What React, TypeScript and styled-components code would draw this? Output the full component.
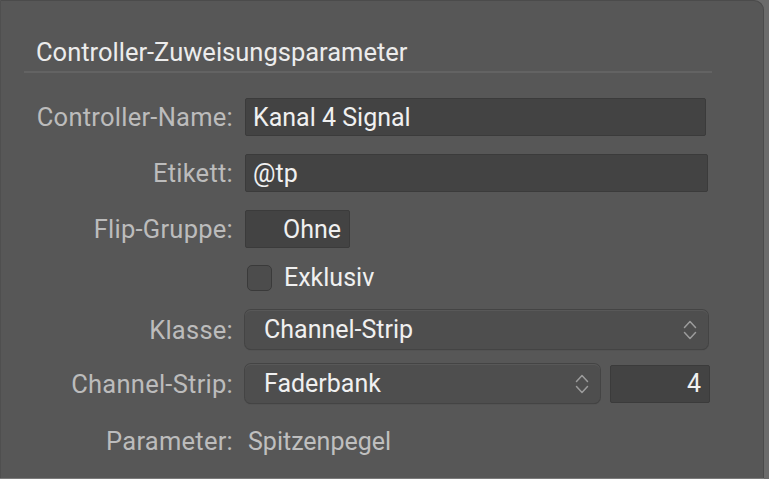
import React from 'react';
import styled, { createGlobalStyle } from 'styled-components';

const GlobalStyle = createGlobalStyle`
  html, body {
    margin: 0;
    padding: 0;
    background: #6b6b6b;
    width: 769px;
    height: 479px;
    overflow: hidden;
  }
  body {
    font-family: Roboto, "Noto Sans", sans-serif;
    -webkit-font-smoothing: antialiased;
  }
`;

const Panel = styled.div`
  box-sizing: border-box;
  width: 764px;
  height: 478px;
  background: #575757;
  border-top: 1px solid #4b4b4b;
  border-right: 1px solid #4b4b4b;
  border-left: 1px solid #4f4f4f;
  border-top-right-radius: 10px;
  padding: 37px 0 0 23px;
  box-shadow: 0 1px 0 #7a7a7a;
`;

const Header = styled.div`
  width: 688px;
  border-bottom: 2px solid #636363;
  padding: 0 0 5px 12px;
  box-sizing: border-box;
`;

const Title = styled.h2`
  margin: 0;
  font-weight: 400;
  font-size: 25.5px;
  line-height: 28px;
  color: #ececec;
`;

const Form = styled.div`
  display: flex;
  flex-direction: column;
`;

const Row = styled.div<{ $top: number; $height: number }>`
  display: grid;
  grid-template-columns: 209px auto;
  column-gap: 12px;
  align-items: center;
  margin-top: ${(p) => p.$top}px;
  height: ${(p) => p.$height}px;
`;

const Label = styled.span`
  text-align: right;
  font-size: 25.5px;
  letter-spacing: 0.25px;
  color: #bcbcbc;
  white-space: nowrap;
`;

const Field = styled.div<{ $width: number; $align?: string }>`
  box-sizing: border-box;
  width: ${(p) => p.$width}px;
  height: 38px;
  background: #434343;
  border: 1px solid #3b3b3b;
  border-radius: 2px;
  display: flex;
  align-items: center;
  justify-content: ${(p) => p.$align || 'flex-start'};
  padding: 0 8px 0 7px;
  font-size: 25px;
  color: #f0f0f0;
`;

const Inline = styled.div`
  display: flex;
  gap: 10px;
  align-items: center;
`;

const Select = styled.div<{ $width: number }>`
  box-sizing: border-box;
  width: ${(p) => p.$width}px;
  height: 39px;
  background: #4e4e4e;
  border-radius: 6px;
  box-shadow: 0 0 0 1px #444, 0 1px 1px rgba(0, 0, 0, 0.35), inset 0 1px 0 #585858;
  display: flex;
  align-items: center;
  justify-content: space-between;
  padding: 0 10px 0 19px;
  font-size: 25px;
  color: #f0f0f0;
`;

const CheckRow = styled.label`
  display: flex;
  align-items: center;
  gap: 12px;
  padding-left: 2px;
  font-size: 25px;
  color: #f0f0f0;
`;

const Box = styled.span`
  box-sizing: border-box;
  width: 25px;
  height: 26px;
  border-radius: 5px;
  background: #4c4c4c;
  border: 1px solid #3a3a3a;
`;

const Value = styled.span`
  font-size: 25px;
  color: #bfbfbf;
  padding-left: 3px;
`;

const Chevrons = () => (
  <svg width="16" height="24" viewBox="0 0 16 24" fill="none">
    <path d="M2.5 9.5 L8 3.5 L13.5 9.5" stroke="#9c9c9c" strokeWidth="1.5" strokeLinecap="round" strokeLinejoin="round" />
    <path d="M2.5 14.5 L8 20.5 L13.5 14.5" stroke="#9c9c9c" strokeWidth="1.5" strokeLinecap="round" strokeLinejoin="round" />
  </svg>
);

export default function App() {
  return (
    <>
      <GlobalStyle />
      <Panel>
        <Header>
          <Title>Controller-Zuweisungsparameter</Title>
        </Header>
        <Form>
          <Row $top={25} $height={38}>
            <Label>Controller-Name:</Label>
            <Field $width={461}>Kanal 4 Signal</Field>
          </Row>
          <Row $top={18} $height={38}>
            <Label>Etikett:</Label>
            <Field $width={463}>@tp</Field>
          </Row>
          <Row $top={18} $height={38}>
            <Label>Flip-Gruppe:</Label>
            <Field $width={105} $align="flex-end">Ohne</Field>
          </Row>
          <Row $top={15} $height={26}>
            <span />
            <CheckRow>
              <Box />
              Exklusiv
            </CheckRow>
          </Row>
          <Row $top={21} $height={39}>
            <Label>Klasse:</Label>
            <Select $width={463}>
              Channel-Strip
              <Chevrons />
            </Select>
          </Row>
          <Row $top={15} $height={38}>
            <Label>Channel-Strip:</Label>
            <Inline>
              <Select $width={355}>
                Faderbank
                <Chevrons />
              </Select>
              <Field $width={100} $align="flex-end">4</Field>
            </Inline>
          </Row>
          <Row $top={24} $height={24}>
            <Label>Parameter:</Label>
            <Value>Spitzenpegel</Value>
          </Row>
        </Form>
      </Panel>
    </>
  );
}
